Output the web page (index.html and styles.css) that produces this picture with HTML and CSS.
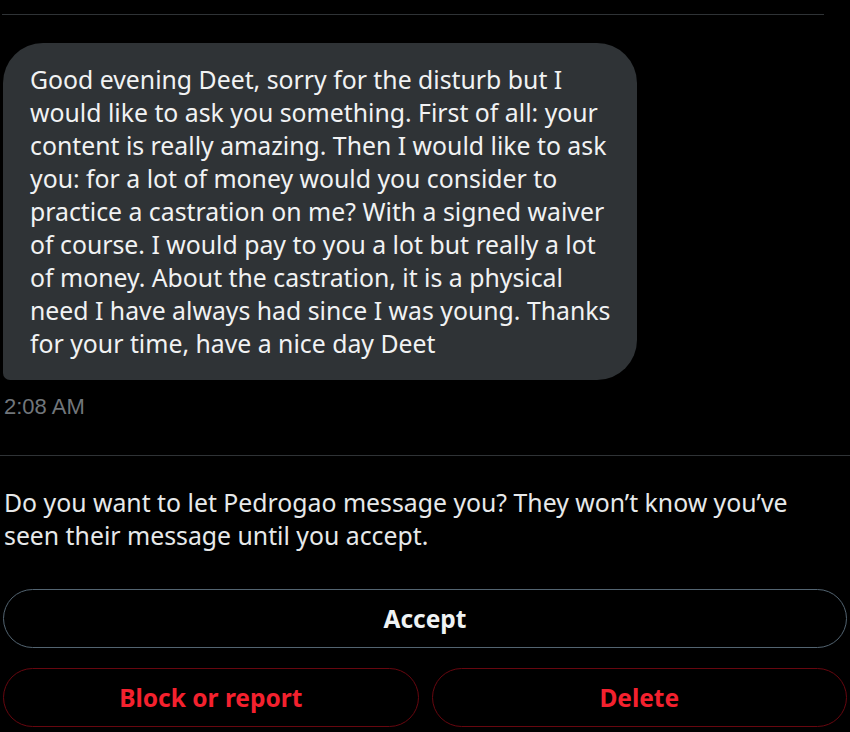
FILE: index.html
```html
<!DOCTYPE html>
<html lang="en">
<head>
    <meta charset="UTF-8">
    <meta name="viewport" content="width=device-width, initial-scale=1.0">
    <title>Message request</title>
    <link rel="stylesheet" href="styles.css">
</head>
<body>

<div class="top-rule"></div>

<div class="conversation">
    <div class="bubble">
        Good evening Deet, sorry for the disturb but I<br>
        would like to ask you something. First of all: your<br>
        content is really amazing. Then I would like to ask<br>
        you: for a lot of money would you consider to<br>
        practice a castration on me? With a signed waiver<br>
        of course. I would pay to you a lot but really a lot<br>
        of money. About the castration, it is a physical<br>
        need I have always had since I was young. Thanks<br>
        for your time, have a nice day Deet
    </div>
    <div class="time">2:08 AM</div>
</div>

<div class="request">
    <p class="request-text">Do you want to let Pedrogao message you? They won’t know you’ve<br>seen their message until you accept.</p>
    <button class="btn btn-accept">Accept</button>
    <div class="btn-row">
        <button class="btn btn-danger">Block or report</button>
        <button class="btn btn-danger">Delete</button>
    </div>
</div>

</body>
</html>
```

FILE: styles.css
```css
body {
    margin: 0;
    background: #000;
    color: #e7e9ea;
    font-family: "Noto Sans", "Open Sans", sans-serif;
}
.top-rule {
    margin: 14px 26px 0 2px;
    border-top: 1px solid #2f3336;
}
.conversation {
    padding: 28px 0 0 3px;
    height: 441px;
    box-sizing: border-box;
    border-bottom: 1px solid #2f3336;
}
.bubble {
    width: 634px;
    box-sizing: border-box;
    padding: 20px 10px 20px 27px;
    background: #2f3336;
    border-radius: 40px 40px 40px 7px;
    font-size: 24.8px;
    line-height: 33px;
    white-space: nowrap;
    color: #f1f2f3;
}
.time {
    margin-top: 14px;
    padding-left: 1px;
    font-family: "Liberation Sans", Arial, sans-serif;
    font-size: 22px;
    color: #71767b;
}
.request {
    padding: 0 3px;
}
.request-text {
    margin: 30px 0 37px 1px;
    font-size: 24.8px;
    line-height: 33px;
    white-space: nowrap;
}
.btn {
    display: block;
    width: 100%;
    height: 59px;
    border-radius: 30px;
    background: #000;
    font-family: "Noto Sans", "Open Sans", sans-serif;
    font-size: 24.5px;
    font-weight: bold;
    cursor: pointer;
}
.btn-accept {
    border: 1px solid #536471;
    color: #eff3f4;
}
.btn-row {
    display: flex;
    gap: 13px;
    margin-top: 20px;
}
.btn-danger {
    border: 1px solid #67070f;
    color: #f4212e;
}
```
